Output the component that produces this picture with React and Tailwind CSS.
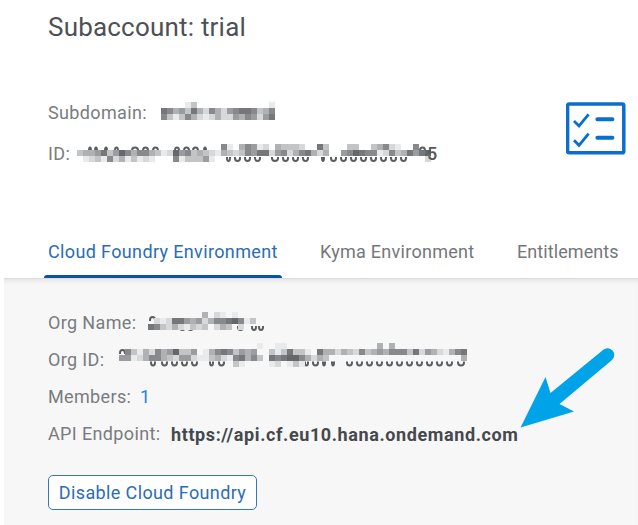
import React from "react";

// Shades run from 0 (clear) to 9 (darkest).
const SHADES = ["", "#e9eaeb", "#d7d8d9", "#c3c4c6", "#b0b1b3", "#9b9c9f", "#88898c", "#76777b", "#65676b", "#505257"];

// Pixelated block that hides a private value. `below` and `above` hold [x, width]
// pairs for the curved dark slivers that show at the edges of the mask.
function Redacted({ rows, width, below = [], above = [], belowY = 0, aboveY = 0, className, children }) {
  return (
    <svg
      className={"block shrink-0 overflow-visible " + className}
      width={width}
      height={rows.length * 6}
      aria-label="redacted"
    >
      <g fill="none" stroke="#5a5d61" strokeWidth="2">
        {below.map(([x, w]) => (
          <path key={"b" + x} d={`M${x} ${belowY - 3} v1 q0 3 ${w / 2} 3 q${w / 2} 0 ${w / 2} -3 v-1`} />
        ))}
        {above.map(([x, w]) => (
          <path key={"a" + x} d={`M${x} ${aboveY + 3} v-1 q0 -3 ${w / 2} -3 q${w / 2} 0 ${w / 2} 3 v1`} />
        ))}
      </g>
      <g shapeRendering="crispEdges">
        {rows.map((row, y) =>
          row.split("").map((c, x) =>
            c === "0" ? null : (
              <rect key={x + "-" + y} x={x * 6} y={y * 6} width="6" height="6" fill={SHADES[Number(c)]} />
            )
          )
        )}
      </g>
      {children}
    </svg>
  );
}

const label = "text-[18px] leading-[24px] tracking-[0.36px] text-[#797c80] whitespace-nowrap";

export default function App() {
  return (
    <div className="relative flex h-[525px] w-[638px] flex-col overflow-hidden bg-white font-['Roboto','Liberation_Sans',sans-serif]">
      <header className="h-[232px] shrink-0 pl-12 pt-[10px]">
        <h1 className="text-[26px] leading-[34px] tracking-[0.2px] text-[#4d5055]">Subaccount: trial</h1>
        <div className="flex justify-between pr-[12px] pt-[57px]">
          <div className="flex flex-col">
            <div className="flex h-[41px]">
              <span className={label + " w-[113px]"}>Subdomain:</span>
              <Redacted
                className="mt-[1px]"
                width={114}
                rows={["0000130000000000001", "7645374264256776346", "6313642124225465257"]}
              />
            </div>
            <div className="flex h-6">
              <span className={label + " w-[29px]"}>ID:</span>
              <Redacted
                className="mt-[2px]"
                width={360}
                aboveY={4.5}
                belowY={16}
                above={[[12, 2], [18, 2], [28, 2], [38, 3], [55, 6], [66, 5], [76, 5], [98, 4], [107, 5], [116, 5], [127, 2], [343, 5]]}
                below={[[150, 3], [158, 5], [168, 5], [178, 5], [195, 6], [206, 5], [216, 5], [226, 5], [245, 2], [254, 5], [264, 5], [274, 5], [284, 5], [294, 5], [304, 5], [314, 5], [324, 5]]}
                rows={[
                  "000000000000000000000000610465120433320073000330034621006000",
                  "344573586466431285634321432365772562467424005687661263475780",
                  "012316241312100061333510000000000000000000000000000000000020",
                ]}
              >
                <text x="350" y="16" fontSize="18" fill="#54575b" className="font-medium">5</text>
              </Redacted>
            </div>
          </div>
          <svg className="mt-[1px]" width="60" height="53" viewBox="0 0 60 53" fill="none" stroke="#0a6ed1" strokeLinecap="round" strokeLinejoin="round">
            <rect x="1.6" y="2" width="56.2" height="48.8" rx="1.6" strokeWidth="3.5" />
            <path d="M8 19 L13 24 L22.6 12.4 M8 38.3 L13 43.3 L22.6 31.7" strokeWidth="2.8" strokeLinecap="butt" strokeLinejoin="miter" />
            <path d="M31.4 17.2 H46.4 M31.4 35.8 H46.4" strokeWidth="4" />
          </svg>
        </div>
      </header>

      <nav className="flex h-[46px] shrink-0 pl-11 text-[18px] leading-[24px] text-[#74777a]">
        <div className="flex w-[238px] flex-col justify-between">
          <span className="whitespace-nowrap pl-1 pt-[8px] tracking-[0.36px] text-[#2a6db5]">Cloud Foundry Environment</span>
          <span className="h-[3px] rounded-t-sm bg-[#0854a0]" />
        </div>
        <span className="ml-[38px] w-[197px] whitespace-nowrap pt-[8px] tracking-[0.27px]">Kyma Environment</span>
        <span className="whitespace-nowrap pt-[8px] tracking-[0.08px]">Entitlements</span>
      </nav>

      <main className="ml-1 flex flex-1 flex-col border-t border-[#dcdcdc] bg-[#f7f7f7] pl-11 pt-[32px] shadow-[inset_0_4px_4px_-2px_#e4e4e4]">
        <div className="flex h-[37px]">
          <span className={label + " w-[100px]"}>Org Name:</span>
          <Redacted
            className="mt-[1px]"
            width={117}
            aboveY={6}
            belowY={17}
            above={[[2, 5]]}
            below={[[32, 5], [40, 5], [90, 5], [104, 4], [111, 4]]}
            rows={["000000000402101000", "021277545246678613", "763242132302430200"]}
          />
        </div>
        <div className="flex h-[37px]">
          <span className={label + " w-[71px]"}>Org ID:</span>
          <Redacted
            className="-mt-[5px]"
            width={350}
            aboveY={8}
            belowY={21.5}
            above={[[1, 5]]}
            below={[[32, 4], [43, 5], [53, 5], [63, 5], [73, 5], [91, 3], [100, 5], [186, 3], [194, 5], [204, 2], [213, 2], [228, 5], [238, 5], [248, 5], [258, 5], [268, 5], [278, 5], [288, 5], [298, 5], [308, 5], [318, 5], [328, 5], [339, 6]]}
            rows={[
              "0000000000000000000000010011000000000000000404000000000000",
              "0631426458335014676354500313733107442432634546663725421467",
              "5512466432552113421674630767886424300000000000000000000004",
              "0000000000000000000310000120131000000000000000000000000000",
            ]}
          />
        </div>
        <div className="flex h-[37px]">
          <span className={label + " w-[92px]"}>Members:</span>
          <span className="text-[18px] leading-[24px] text-[#2581e2]">1</span>
        </div>
        <div className="flex h-[55px]">
          <span className={label + " w-[123px]"}>API Endpoint:</span>
          <span className="mt-px whitespace-nowrap text-[18px] font-bold leading-[24px] tracking-[0.61px] text-[#45484c]">https://api.cf.eu10.hana.ondemand.com</span>
        </div>
        <button className="-mt-[2px] flex h-[35px] w-[209px] shrink-0 items-center justify-center whitespace-nowrap rounded-[5px] border border-[#3577b9] bg-white text-[18px] tracking-[0.38px] text-[#2a6db5]">
          Disable Cloud Foundry
        </button>
      </main>

      <svg className="absolute left-[520px] top-[346px]" width="96" height="82" viewBox="0 0 96 82" fill="#00a2e8">
        <path d="M0.5 81.5 L25.5 31 L30.5 47 L83 4 A6.6 6.6 0 0 1 92 14 L39.5 58 L54 65.5 Z" />
      </svg>
    </div>
  );
}
